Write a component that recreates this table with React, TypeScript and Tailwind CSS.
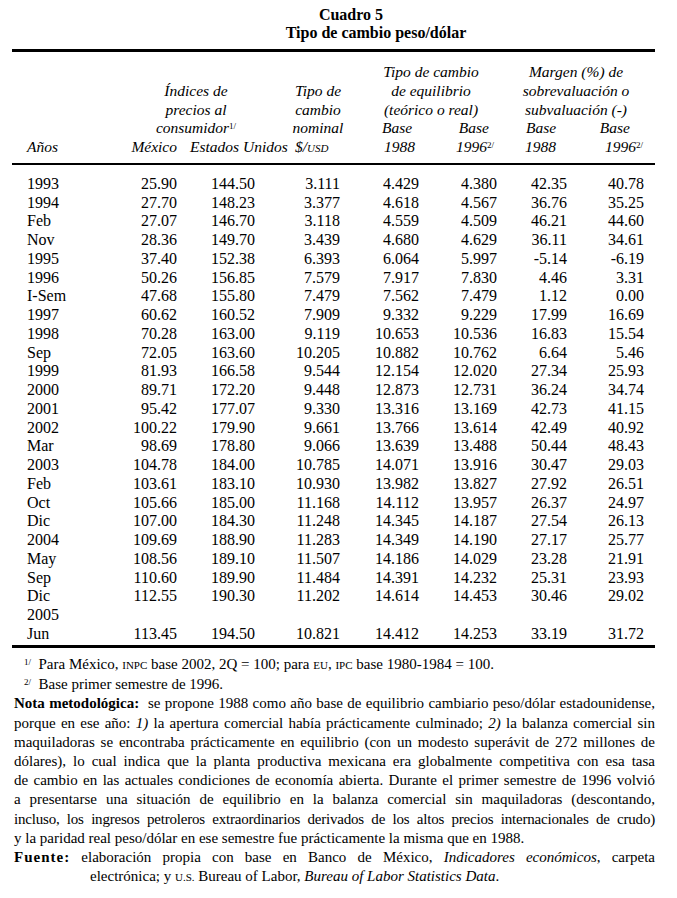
const rows: string[][] = [
	['1993', '25.90', '144.50', '3.111', '4.429', '4.380', '42.35', '40.78'],
	['1994', '27.70', '148.23', '3.377', '4.618', '4.567', '36.76', '35.25'],
	['Feb', '27.07', '146.70', '3.118', '4.559', '4.509', '46.21', '44.60'],
	['Nov', '28.36', '149.70', '3.439', '4.680', '4.629', '36.11', '34.61'],
	['1995', '37.40', '152.38', '6.393', '6.064', '5.997', '-5.14', '-6.19'],
	['1996', '50.26', '156.85', '7.579', '7.917', '7.830', '4.46', '3.31'],
	['I-Sem', '47.68', '155.80', '7.479', '7.562', '7.479', '1.12', '0.00'],
	['1997', '60.62', '160.52', '7.909', '9.332', '9.229', '17.99', '16.69'],
	['1998', '70.28', '163.00', '9.119', '10.653', '10.536', '16.83', '15.54'],
	['Sep', '72.05', '163.60', '10.205', '10.882', '10.762', '6.64', '5.46'],
	['1999', '81.93', '166.58', '9.544', '12.154', '12.020', '27.34', '25.93'],
	['2000', '89.71', '172.20', '9.448', '12.873', '12.731', '36.24', '34.74'],
	['2001', '95.42', '177.07', '9.330', '13.316', '13.169', '42.73', '41.15'],
	['2002', '100.22', '179.90', '9.661', '13.766', '13.614', '42.49', '40.92'],
	['Mar', '98.69', '178.80', '9.066', '13.639', '13.488', '50.44', '48.43'],
	['2003', '104.78', '184.00', '10.785', '14.071', '13.916', '30.47', '29.03'],
	['Feb', '103.61', '183.10', '10.930', '13.982', '13.827', '27.92', '26.51'],
	['Oct', '105.66', '185.00', '11.168', '14.112', '13.957', '26.37', '24.97'],
	['Dic', '107.00', '184.30', '11.248', '14.345', '14.187', '27.54', '26.13'],
	['2004', '109.69', '188.90', '11.283', '14.349', '14.190', '27.17', '25.77'],
	['May', '108.56', '189.10', '11.507', '14.186', '14.029', '23.28', '21.91'],
	['Sep', '110.60', '189.90', '11.484', '14.391', '14.232', '25.31', '23.93'],
	['Dic', '112.55', '190.30', '11.202', '14.614', '14.453', '30.46', '29.02'],
	['2005', '', '', '', '', '', '', ''],
	['Jun', '113.45', '194.50', '10.821', '14.412', '14.253', '33.19', '31.72'],
]

const cols = 'grid grid-cols-[88px_77px_78px_85px_79px_78px_70px_77px]'
const justified = 'text-justify [text-align-last:justify]'

function Sup({ children }: { children: React.ReactNode }) {
	return <sup className="text-[9px] not-italic">{children}</sup>
}

function Sc({ children }: { children: React.ReactNode }) {
	return <span className="text-[11px]">{children}</span>
}

export default function App() {
	return (
		<div className="min-h-screen w-[677px] bg-white text-black font-['Liberation_Serif',serif]">
			<div className="ml-[12px] w-[643px]">
				{/* title */}
				<div className="pt-[6px] text-[16px] leading-[18px] font-bold">
					<div className="text-center pl-[35px]">Cuadro 5</div>
					<div className="text-center pl-[85px]">Tipo de cambio peso/dólar</div>
				</div>

				<div className="mt-[7px] h-[3px] bg-black" />

				{/* header */}
				<div className={`${cols} pt-[11px] pb-[5px] text-[15.5px] leading-[18.75px] italic whitespace-nowrap`}>
					<div className="col-start-5 col-span-2 row-start-1 flex justify-center pl-[25px]">Tipo de cambio</div>
					<div className="col-start-7 col-span-2 row-start-1 flex justify-center pl-[11px]">Margen (%) de</div>

					<div className="col-start-2 col-span-2 row-start-2 flex justify-center pl-[37px]">Índices de</div>
					<div className="col-start-4 row-start-2 flex justify-center pl-[41px]">Tipo de</div>
					<div className="col-start-5 col-span-2 row-start-2 flex justify-center pl-[25px]">de equilibrio</div>
					<div className="col-start-7 col-span-2 row-start-2 flex justify-center pl-[11px]">sobrevaluación o</div>

					<div className="col-start-2 col-span-2 row-start-3 flex justify-center pl-[37px]">precios al</div>
					<div className="col-start-4 row-start-3 flex justify-center pl-[41px]">cambio</div>
					<div className="col-start-5 col-span-2 row-start-3 flex justify-center pl-[25px]">(teórico o real)</div>
					<div className="col-start-7 col-span-2 row-start-3 flex justify-center pl-[11px]">subvaluación (-)</div>

					<div className="col-start-2 col-span-2 row-start-4 flex justify-center pl-[37px]">
						<span>
							consumidor<Sup>1/</Sup>
						</span>
					</div>
					<div className="col-start-4 row-start-4 flex justify-center pl-[41px]">nominal</div>
					<div className="col-start-5 row-start-4 pl-[42px]">Base</div>
					<div className="col-start-6 row-start-4 flex justify-end pr-[8px]">Base</div>
					<div className="col-start-7 row-start-4 pl-[29px]">Base</div>
					<div className="col-start-8 row-start-4 flex justify-end pr-[14px]">Base</div>

					<div className="col-start-1 row-start-5 pl-[15px]">Años</div>
					<div className="col-start-2 row-start-5 flex justify-end">México</div>
					<div className="col-start-3 row-start-5 pl-[13px]">Estados Unidos</div>
					<div className="col-start-4 row-start-5 pl-[40px]">
						$/<Sc>USD</Sc>
					</div>
					<div className="col-start-5 row-start-5 pl-[44px]">1988</div>
					<div className="col-start-6 row-start-5 flex justify-end pr-[3px]">
						<span>
							1996<Sup>2/</Sup>
						</span>
					</div>
					<div className="col-start-7 row-start-5 pl-[28px]">1988</div>
					<div className="col-start-8 row-start-5 flex justify-end pr-[1px]">
						<span>
							1996<Sup>2/</Sup>
						</span>
					</div>
				</div>

				<div className="h-[2px] bg-black" />

				{/* body */}
				<div className={`${cols} pt-[10px] text-[16px] leading-[18.75px]`}>
					{rows.map((r, i) =>
						r.map((v, j) => (
							<div key={`${i}-${j}`} className={j === 0 ? 'pl-[15px]' : 'text-right'}>
								{v}
							</div>
						))
					)}
				</div>

				<div className="mt-[1.5px] h-[3px] bg-black" />

				{/* notes */}
				<div className="pt-[7px] text-[15px] leading-[19.2px]">
					<div className="pl-[12px]">
						<Sup>1/</Sup>&nbsp; Para México, <Sc>INPC</Sc> base 2002, 2Q = 100; para <Sc>EU</Sc>, <Sc>IPC</Sc> base
						1980-1984 = 100.
					</div>
					<div className="pl-[12px]">
						<Sup>2/</Sup>&nbsp; Base primer semestre de 1996.
					</div>
					<div className="pl-[2px]">
						<div className={justified}>
							<b>Nota metodológica:</b>&nbsp; se propone 1988 como año base de equilibrio cambiario peso/dólar estadounidense,
						</div>
						<div className={justified}>
							porque en ese año: <i>1)</i> la apertura comercial había prácticamente culminado; <i>2)</i> la balanza
							comercial sin
						</div>
						<div className={justified}>
							maquiladoras se encontraba prácticamente en equilibrio (con un modesto superávit de 272 millones de
						</div>
						<div className={justified}>
							dólares), lo cual indica que la planta productiva mexicana era globalmente competitiva con esa tasa
						</div>
						<div className={justified}>
							de cambio en las actuales condiciones de economía abierta. Durante el primer semestre de 1996 volvió
						</div>
						<div className={justified}>
							a presentarse una situación de equilibrio en la balanza comercial sin maquiladoras (descontando,
						</div>
						<div className={`${justified} tracking-[-0.2px]`}>
							incluso, los ingresos petroleros extraordinarios derivados de los altos precios internacionales de crudo)
						</div>
						<div className="whitespace-nowrap">
							y la paridad real peso/dólar en ese semestre fue prácticamente la misma que en 1988.
						</div>
						<div className={justified}>
							<b className="tracking-[1px]">Fuente:</b> elaboración propia con base en Banco de México,{' '}
							<i>Indicadores económicos</i>, carpeta
						</div>
						<div className="pl-[76px] whitespace-nowrap">
							electrónica; y <Sc>U.S.</Sc> Bureau of Labor, <i>Bureau of Labor Statistics Data</i>.
						</div>
					</div>
				</div>
			</div>
		</div>
	)
}
